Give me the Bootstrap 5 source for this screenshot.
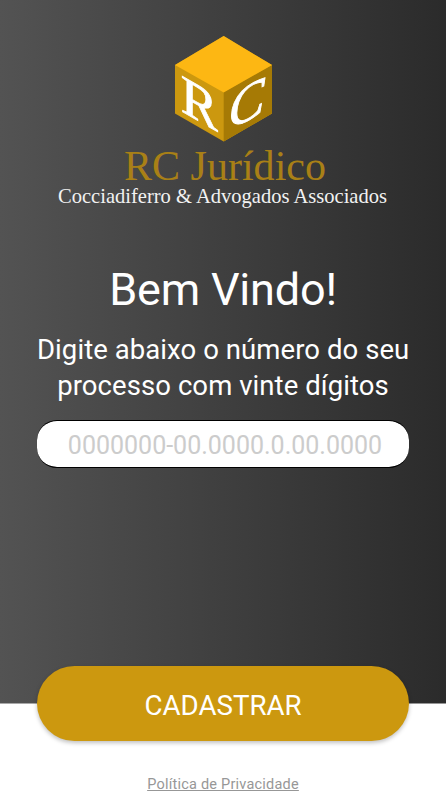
<!DOCTYPE html>
<html lang="pt-BR">
<head>
<meta charset="utf-8">
<meta name="viewport" content="width=device-width, initial-scale=1">
<title>RC Jurídico</title>
<link href="https://cdn.jsdelivr.net/npm/bootstrap@5.3.0/dist/css/bootstrap.min.css" rel="stylesheet">
<style>
  body { font-family: Roboto, sans-serif; }
  .screen { height: 800px; padding: 0 37px; background: linear-gradient(#0000 703px, #fff 704px), linear-gradient(90deg, #535353, #2b2b2b); }
  .logo { width: 372px; height: 178px; margin-top: 34px; }
  .welcome { font-size: 45px; line-height: 54px; margin-top: 51px; letter-spacing: -.2px; }
  .hint { font-size: 27.5px; line-height: 36px; margin-top: 15px; letter-spacing: .07px; }
  .process-input { height: 48px; margin-top: 16px; border: 1px solid #000; border-width: 1px 0; border-radius: 20px; padding: 3px 0 0 4px; font-size: 25px; }
  .process-input::placeholder { color: #ccc; opacity: 1; }
  .register { height: 75px; margin-top: 198px; padding-top: 10px; border-radius: 38px; font-size: 27.7px; background: #cc980f; box-shadow: 0 2px 4px rgba(0,0,0,.25); }
  .policy { font-size: 14.5px; line-height: 18px; margin-top: 35px; letter-spacing: .22px; color: #979797; }
</style>
</head>
<body>
<main class="screen d-flex flex-column align-items-stretch text-center text-white">
  <svg class="logo flex-shrink-0" viewBox="37 34 372 178" role="img" aria-label="RC Jurídico">
    <path d="M223.7 36 272 65v48.500L223.700 141.500 175 113.500V65Z" fill="#cc980f"/>
    <path d="M223.700 92 272 65v48.500L223.700 141.500Z" fill="#a67a05"/>
    <path d="M223.700 36 272 65 223.700 92.500 175 65Z" fill="#fdb713"/>
    <g fill="#fff" font-family="'Liberation Serif', serif">
      <g stroke="#fff" stroke-width=".9">
        <text transform="matrix(1 .57 0 1 180.700 110.800)" font-size="54" textLength="37" lengthAdjust="spacingAndGlyphs">R</text>
        <text transform="matrix(1 -.52 0 1 228.500 130.500)" font-size="53" font-style="italic" textLength="36" lengthAdjust="spacingAndGlyphs">C</text>
      </g>
      <text x="124" y="180" font-size="43" fill="#a98016" textLength="202" lengthAdjust="spacingAndGlyphs">RC Jurídico</text>
      <text x="58" y="203" font-size="21" fill="#f2f2f2" textLength="329" lengthAdjust="spacingAndGlyphs">Cocciadiferro &amp; Advogados Associados</text>
    </g>
  </svg>
  <h1 class="welcome fw-normal mb-0">Bem Vindo!</h1>
  <p class="hint mb-0 text-nowrap">Digite abaixo o número do seu<br>processo com vinte dígitos</p>
  <input class="process-input form-control text-center shadow-none flex-shrink-0" type="text" placeholder="0000000-00.0000.0.00.0000" aria-label="Número do processo">
  <button class="register btn border-0 text-white flex-shrink-0" type="button">CADASTRAR</button>
  <a class="policy align-self-center text-decoration-underline" href="#">Política de Privacidade</a>
</main>
<script src="https://cdn.jsdelivr.net/npm/bootstrap@5.3.0/dist/js/bootstrap.bundle.min.js"></script>
</body>
</html>
